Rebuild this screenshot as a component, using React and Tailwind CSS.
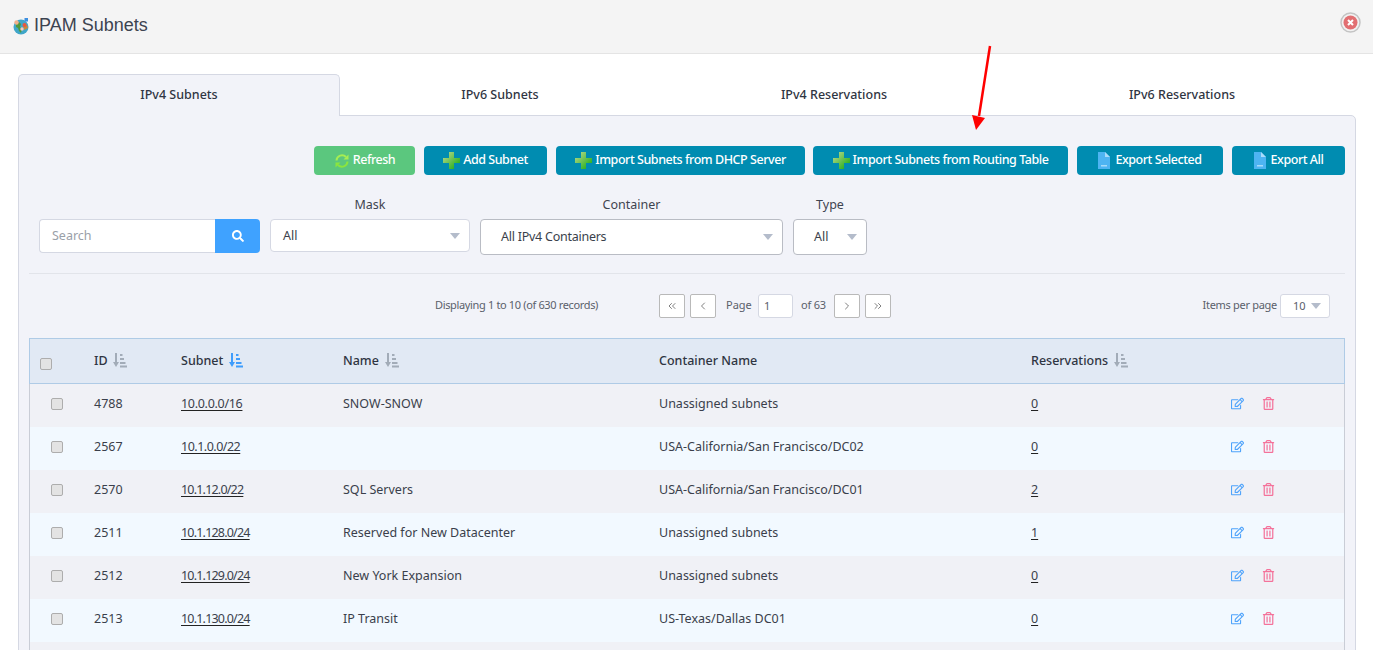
import React from "react";
import { FaRegEdit, FaRegTrashAlt, FaSearch } from "react-icons/fa";
import { ChevronLeft, ChevronRight, ChevronsLeft, ChevronsRight } from "lucide-react";

const rows = [
  ["4788", "10.0.0.0/16", "SNOW-SNOW", "Unassigned subnets", "0", "tracking-[-0.3px]"],
  ["2567", "10.1.0.0/22", "", "USA-California/San Francisco/DC02", "0", "tracking-[-0.5px]"],
  ["2570", "10.1.12.0/22", "SQL Servers", "USA-California/San Francisco/DC01", "2", "tracking-[-0.8px]"],
  ["2511", "10.1.128.0/24", "Reserved for New Datacenter", "Unassigned subnets", "1", "tracking-[-0.8px]"],
  ["2512", "10.1.129.0/24", "New York Expansion", "Unassigned subnets", "0", "tracking-[-0.8px]"],
  ["2513", "10.1.130.0/24", "IP Transit", "US-Texas/Dallas DC01", "0", "tracking-[-0.8px]"],
];

function Plus() {
  return (
    <svg width="17" height="17" viewBox="0 0 17 17" className="shrink-0">
      <defs>
        <linearGradient id="plusg" x1="0" y1="0" x2="1" y2="1">
          <stop offset="0" stopColor="#c2dc94" />
          <stop offset="1" stopColor="#0fa80b" />
        </linearGradient>
      </defs>
      <path d="M6 0h5v6h6v5h-6v6H6v-6H0V6h6z" fill="url(#plusg)" />
    </svg>
  );
}

function Csv() {
  return (
    <svg width="12" height="17" viewBox="0 0 12 17" className="shrink-0">
      <path d="M0 0h7l5 5v12H0z" fill="#4db4f2" />
      <path d="M7 0l5 5H7z" fill="#a9dcfa" />
      <rect x="3" y="13" width="6" height="1.500" fill="#a6dbf9" />
    </svg>
  );
}

function Refresh() {
  return (
    <svg width="16" height="16" viewBox="0 0 16 16" className="shrink-0" fill="none">
      <path d="M2.500 7.500a5.500 5.500 0 0 1 9.500-3.500" stroke="#a6ee52" strokeWidth="2" />
      <path d="M14.500 1.500v5H9.500z" fill="#a6ee52" />
      <path d="M13.500 8.500a5.500 5.500 0 0 1-9.500 3.500" stroke="#8be53e" strokeWidth="2" />
      <path d="M1.500 14.500v-5h5z" fill="#8be53e" />
    </svg>
  );
}

function Globe() {
  return (
    <svg width="17" height="18" viewBox="0 0 17 18" className="shrink-0">
      <circle cx="8" cy="10" r="7.500" fill="#3fa6c9" />
      <path d="M3 7l3-2 2 2-1 3 2 2-1 4-2-2-1-3-2-1z" fill="#4f9a3c" />
      <path d="M10 8l4 0 1 3-4 2z" fill="#c9883a" />
      <circle cx="3.500" cy="5.500" r="2.200" fill="#f0b08c" />
      <circle cx="9" cy="12" r="1.700" fill="#f6c9c0" />
      <circle cx="11.500" cy="8" r="2" fill="#e9573f" />
      <rect x="11.500" y="1" width="3.500" height="3.500" fill="#3d8fe0" />
    </svg>
  );
}

function Close() {
  return (
    <svg width="21" height="21" viewBox="0 0 21 21">
      <circle cx="10.500" cy="10.500" r="9.500" fill="#f2f2f2" stroke="#c4c4c4" strokeWidth="1.500" />
      <circle cx="10.500" cy="10.500" r="7" fill="#e26f72" />
      <path d="M8 8l5 5M13 8l-5 5" stroke="#fff" strokeWidth="2" />
    </svg>
  );
}

function Sort({ active }) {
  const c = active ? "#3f9dfc" : "#a2acb8";
  return (
    <svg width="14" height="15" viewBox="0 0 14 15" className="shrink-0 mb-[2px]" fill={c}>
      <rect x="2" y="0" width="2" height="10" />
      <path d="M0 9h6l-3 5z" />
      <rect x="7" y="1" width="2.500" height="2" />
      <rect x="7" y="5" width="4" height="2" />
      <rect x="7" y="9" width="5.500" height="2" />
      <rect x="7" y="12.500" width="7" height="2" />
    </svg>
  );
}

function Caret({ className = "" }) {
  return <span className={"w-0 h-0 border-x-[5px] border-x-transparent border-t-[6px] border-t-[#b4bccb] " + className} />;
}

function Btn({ w, color = "bg-[#008cb1]", icon, gap = "gap-[3px]", children }) {
  return (
    <button className={`h-[29px] ${w} ${color} rounded-[4px] text-white text-[12.500px] tracking-[-0.45px] font-medium flex items-center justify-center ${gap}`}>
      {icon}
      <span>{children}</span>
    </button>
  );
}

function PageBtn({ children }) {
  return (
    <button className="w-[26px] h-[24px] bg-white border border-[#b9b9b9] rounded-[2px] flex items-center justify-center text-[#555]">
      {children}
    </button>
  );
}

function Check({ className = "" }) {
  return <span className={"block w-[12px] h-[12px] rounded-[2px] bg-[#e3e3e3] border border-[#adadad] " + className} />;
}

const cols = "grid grid-cols-[64px_87px_162px_316px_372px_200px_1fr] items-center";
const ic = { size: 12, strokeWidth: 1.5 };

export default function App() {
  return (
    <div className="relative w-[1373px] h-[650px] overflow-hidden bg-white text-[#3a3f4b] font-['Noto_Sans','Open_Sans',sans-serif]">
      <header className="h-[54px] bg-[#f4f4f4] border-b border-[#e4e4e4] flex items-center justify-between pl-[13px] pr-[12px]">
        <div className="flex items-center gap-[4px] font-['Liberation_Sans',sans-serif] text-[18px] text-[#3c4350] -mt-[2px]">
          <Globe />
          <span>IPAM Subnets</span>
        </div>
        <span className="-mt-[8px]"><Close /></span>
      </header>

      <main className="pl-[18px] pr-[17px] pt-[20px]">
        <nav className="flex h-[41px] text-[12.500px] text-[#2f3542] font-medium">
          <div className="w-[322px] h-[42px] bg-[#f2f3f9] border border-b-0 border-[#d5d8e3] rounded-t-[5px] flex items-center justify-center relative z-10">IPv4 Subnets</div>
          <div className="w-[320px] h-[42px] flex items-center justify-center">IPv6 Subnets</div>
          <div className="w-[348px] h-[42px] flex items-center justify-center">IPv4 Reservations</div>
          <div className="w-[348px] h-[42px] flex items-center justify-center">IPv6 Reservations</div>
        </nav>

        <section className="bg-[#f2f3f9] border border-[#d5d8e3] rounded-[5px] rounded-tl-none px-[10px] pt-[30px] h-[600px]">
          <div className="flex justify-end gap-[9px]">
            <Btn w="w-[101px]" color="bg-[#5bc77e]" icon={<Refresh />}>Refresh</Btn>
            <Btn w="w-[123px]" icon={<Plus />}>Add Subnet</Btn>
            <Btn w="w-[249px] -mr-px" icon={<Plus />}>Import Subnets from DHCP Server</Btn>
            <Btn w="w-[255px]" icon={<Plus />}>Import Subnets from Routing Table</Btn>
            <Btn w="w-[146px]" gap="gap-[5px]" icon={<Csv />}>Export Selected</Btn>
            <Btn w="w-[113px]" gap="gap-[5px]" icon={<Csv />}>Export All</Btn>
          </div>

          <div className="flex items-start gap-[10px] pl-[10px] mt-[20px] text-[12.500px]">
            <div className="pt-[24px]">
              <div className="flex w-[221px] h-[34px]">
                <span className="flex-1 pl-[12px] flex items-center text-[#9aa0a8] bg-white border border-r-0 border-[#d5d8e3] rounded-l-[4px]">Search</span>
                <span className="w-[45px] bg-[#3fa2ff] rounded-r-[4px] flex items-center justify-center text-white text-[12px]"><FaSearch /></span>
              </div>
            </div>
            <div className="w-[200px]">
              <div className="h-[24px] pt-[1px] text-center text-[#3f4450]">Mask</div>
              <div className="h-[33px] border border-[#d5d8e3] rounded-[4px] bg-white flex items-center justify-between pl-[12px] pr-[9px]">
                <span className="pt-[2px]">All</span><Caret />
              </div>
            </div>
            <div className="w-[303px]">
              <div className="h-[24px] pt-[1px] text-center text-[#3f4450]">Container</div>
              <div className="h-[36px] border border-[#b9bcc4] rounded-[4px] bg-white flex items-center justify-between pl-[20px] pr-[9px]">
                <span className="tracking-[-0.25px]">All IPv4 Containers</span><Caret />
              </div>
            </div>
            <div className="w-[74px]">
              <div className="h-[24px] pt-[1px] text-center text-[#3f4450]">Type</div>
              <div className="h-[36px] border border-[#b9bcc4] rounded-[4px] bg-white flex items-center justify-between pl-[20px] pr-[9px]">
                <span>All</span><Caret />
              </div>
            </div>
          </div>

          <div className="border-t border-[#e2e4ea] mt-[18px]" />

          <div className="flex items-center h-[24px] mt-[20px] text-[11px] text-[#5a606b]">
            <span className="ml-[406px] w-[224px] mb-[2px] tracking-[-0.35px]">Displaying 1 to 10 (of 630 records)</span>
            <div className="flex items-center gap-[5px]">
              <PageBtn><ChevronsLeft {...ic} /></PageBtn>
              <PageBtn><ChevronLeft {...ic} /></PageBtn>
            </div>
            <span className="ml-[10px] w-[32px] mb-[2px]">Page</span>
            <span className="w-[35px] h-[24px] border border-[#d5d8e3] rounded-[3px] bg-white flex items-center pl-[5px]">1</span>
            <span className="ml-[8px] w-[33px] mb-[2px] tracking-[-0.2px]">of 63</span>
            <div className="flex items-center gap-[5px]">
              <PageBtn><ChevronRight {...ic} /></PageBtn>
              <PageBtn><ChevronsRight {...ic} /></PageBtn>
            </div>
            <span className="ml-auto mr-[3px] mb-[2px] tracking-[-0.3px]">Items per page</span>
            <span className="w-[50px] h-[24px] border border-[#d5d8e3] rounded-[3px] bg-white flex items-center justify-between pl-[12px] pr-[8px] mr-[15px]">
              <span>10</span><Caret />
            </span>
          </div>

          <div className="mt-[20px] border-x border-[#c9cdd6] text-[12.500px]">
            <div className={`${cols} h-[46px] bg-[#e1e9f4] border border-[#afcbe6] -mx-px text-[#2f3542] font-medium`}>
              <span className="pl-[10px] pt-[5px]"><Check /></span>
              <span className="flex items-center gap-[5px]">ID <Sort /></span>
              <span className="flex items-center gap-[6px]">Subnet <Sort active /></span>
              <span className="flex items-center gap-[6px]">Name <Sort /></span>
              <span>Container Name</span>
              <span className="flex items-center gap-[6px]">Reservations <Sort /></span>
              <span />
            </div>
            {rows.map((r, i) => (
              <div key={r[0]} className={`${cols} h-[43px] pb-[3px] ${i % 2 ? "bg-[#f2f9ff]" : "bg-[#f0f1f6]"}`}>
                <span className="pl-[21px]"><Check /></span>
                <span>{r[0]}</span>
                <a className={`underline underline-offset-2 decoration-[#222] ${r[5]}`}>{r[1]}</a>
                <span>{r[2]}</span>
                <span>{r[3]}</span>
                <a className="underline underline-offset-2 decoration-[#222]">{r[4]}</a>
                <span className="flex items-center gap-[18px] text-[13px] mb-[2px]">
                  <FaRegEdit className="text-[#4ea3fb]" />
                  <FaRegTrashAlt className="text-[#f4729a]" />
                </span>
              </div>
            ))}
            <div className="h-[43px] bg-[#f0f1f6]" />
          </div>
        </section>
      </main>

      <svg className="absolute left-[970px] top-[44px]" width="26" height="90" viewBox="0 0 26 90">
        <path d="M20 2L9 72" stroke="#f00" strokeWidth="2.500" />
        <path d="M2 71l13 3-9 12z" fill="#f00" />
      </svg>
    </div>
  );
}
